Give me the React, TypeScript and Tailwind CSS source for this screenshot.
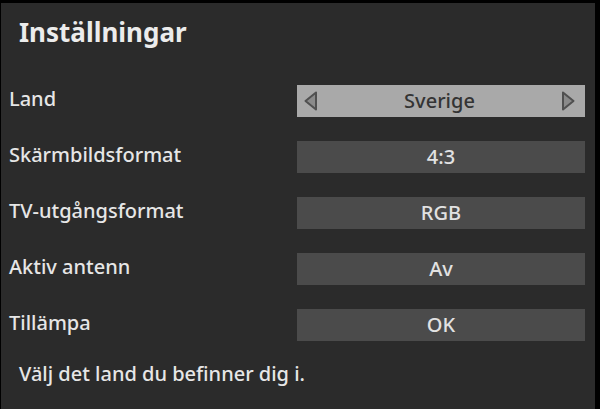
import React from 'react';

// ---- DATA ---- //
const rows = [
  {label: 'Land', value: 'Sverige', active: true},
  {label: 'Skärmbildsformat', value: '4:3'},
  {label: 'TV-utgångsformat', value: 'RGB'},
  {label: 'Aktiv antenn', value: 'Av'},
  {label: 'Tillämpa', value: 'OK'},
];

function Arrow({dir}: {dir: 'left' | 'right'}) {
  const points = dir === 'left' ? '12,1.5 12,18.5 1.5,10' : '2,1.5 2,18.5 12.5,10';
  return (
    <svg width="14" height="20" viewBox="0 0 14 20" className="shrink-0">
      <polygon
        points={points}
        fill="#8a8a8a"
        stroke="#505050"
        strokeWidth="2"
        strokeLinejoin="round"
      />
    </svg>
  );
}

export default function App() {
  return (
    <div
      className="w-[600px] h-[409px] overflow-hidden bg-black pt-[3px] pr-[5px] pl-px"
      style={{fontFamily: '"Noto Sans", "DejaVu Sans", sans-serif'}}
    >
      <div className="h-full bg-[#2b2b2b] text-[#e6e6e6]">
        <h1 className="pt-[12px] pl-[18px] text-[26px] leading-[35px] font-bold text-[#ececec]">
          Inställningar
        </h1>

        <div className="mt-[35px] flex flex-col gap-[24px]">
          {rows.map((row) => (
            <div key={row.label} className="flex items-start h-[32px]">
              <span className="pl-[8px] text-[20px] leading-[27px] font-medium w-[296px]">
                {row.label}
              </span>
              {row.active ? (
                <div className="w-[288px] h-[32px] bg-[#a9a9a9] flex items-center pl-[7px] pr-[10px]">
                  <Arrow dir="left" />
                  <span className="flex-1 text-center text-[20px] leading-[27px] font-medium text-[#343434] -mt-[2px]">
                    {row.value}
                  </span>
                  <Arrow dir="right" />
                </div>
              ) : (
                <div className="w-[288px] h-[32px] bg-[#4b4b4b] flex items-center justify-center">
                  <span className="text-[20px] leading-[27px] font-medium text-[#e2e2e2] -mt-[2px]">
                    {row.value}
                  </span>
                </div>
              )}
            </div>
          ))}
        </div>

        <p className="mt-[19px] pl-[18px] text-[20px] leading-[27px] font-medium">
          Välj det land du befinner dig i.
        </p>
      </div>
    </div>
  );
}
